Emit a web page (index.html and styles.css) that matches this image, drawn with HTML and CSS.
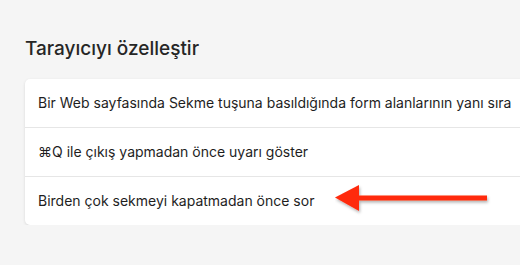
FILE: index.html
```html
<!DOCTYPE html>
<html>

<head>
    <meta http-equiv="Content-Type" content="text/html; charset=utf-8" />
    <title>Tarayıcıyı özelleştir</title>
    <link rel="stylesheet" href="styles.css">
</head>

<body>
    <div class="page">
        <h2 class="title">Tarayıcıyı özelleştir</h2>
        <div class="card">
            <div class="row">Bir Web sayfasında Sekme tuşuna basıldığında form alanlarının yanı sıra</div>
            <div class="row">⌘Q ile çıkış yapmadan önce uyarı göster</div>
            <div class="row">Birden çok sekmeyi kapatmadan önce sor</div>
        </div>

        <!-- annotation arrow -->
        <svg class="arrow" width="170" height="40" viewBox="0 0 170 40">
            <defs>
                <filter id="sh" x="-10%" y="-30%" width="130%" height="180%">
                    <feDropShadow dx="1" dy="2" stdDeviation="1.5" flood-color="#000" flood-opacity="0.3" />
                </filter>
            </defs>
            <g filter="url(#sh)">
                <rect x="20" y="15.5" width="132" height="5" fill="#ff2a0c" />
                <polygon points="0,17.5 24,5 24,31" fill="#ff2a0c" />
            </g>
        </svg>
    </div>
</body>

</html>
```
FILE: styles.css
```css
body {
    margin: 0;
    background: #f5f5f5;
    overflow: hidden;
    font-family: Inter, "Noto Sans", sans-serif;
    color: #1e1e1e;
}

.page {
    position: relative;
    padding: 37px 0 0 25px;
}

.title {
    margin: 0 0 18px 0;
    font-size: 19px;
    font-weight: 500;
    line-height: 24px;
    color: #262626;
}

.card {
    width: 600px;
    background: white;
    border-radius: 5px;
    box-shadow: 0 1px 3px rgba(0, 0, 0, 0.12);
}

.row {
    height: 48px;
    line-height: 48px;
    padding-left: 13px;
    font-size: 14px;
    white-space: nowrap;
    border-bottom: 1px solid #e6e6e6;
}

.row:last-child {
    border-bottom: none;
}

.arrow {
    position: absolute;
    left: 335px;
    top: 180px;
}
```
